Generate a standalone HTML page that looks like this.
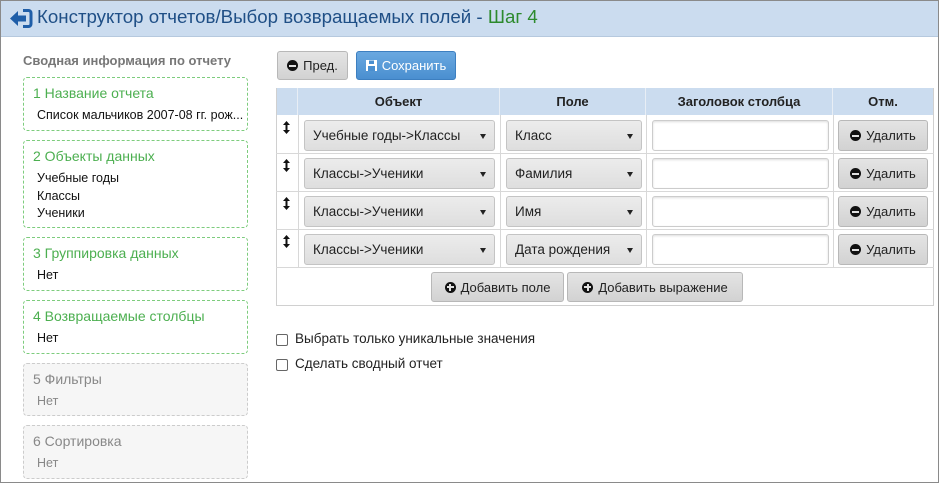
<!DOCTYPE html>
<html><head><meta charset="utf-8"><style>
*{box-sizing:border-box;margin:0;padding:0}
body{width:939px;height:483px;position:relative;overflow:hidden;background:#fff;font-family:"Liberation Sans","DejaVu Sans",sans-serif;font-size:13px;color:#222}
.frame{position:absolute;left:0;top:0;width:939px;height:483px;border:1px solid #8a8a8a;pointer-events:none}
.hdr{position:absolute;left:0;top:0;width:939px;height:37px;background:#cbdcef;border-bottom:1px solid #b6c9de}
.title{position:absolute;left:37px;top:6px;font-size:18.7px;color:#1f4f86;white-space:nowrap}
.title b{font-weight:normal;color:#2d8a2d}
.a{position:absolute}
.sum{left:23px;top:53px;font-weight:bold;color:#777;font-size:13px}
.card{position:absolute;left:23px;width:225px;border:1px dashed #7dcc7d;border-radius:4px;padding:7px 0 0 9px}
.card .t{color:#4caf50;font-size:14px;margin-bottom:6px}
.card .v{padding-left:4px;font-size:12.5px;line-height:17.5px;color:#111}
.card.g{background:#f6f6f6;border-color:#ccc}
.card.g .t{color:#888}.card.g .v{color:#888}
.btn{position:absolute;height:29px;border:1px solid #b8b8b8;border-radius:3px;background:linear-gradient(#e4e4e4,#d2d2d2);font-size:13px;color:#222;display:flex;align-items:center;justify-content:center;gap:5px}
.ic{display:inline-block;width:11px;height:11px;border-radius:50%;background:#111;position:relative}
.ic::after{content:"";position:absolute;left:2px;top:4.5px;width:7px;height:2px;background:#e0e0e0}
.ic.p::before{content:"";position:absolute;left:4.5px;top:2px;width:2px;height:7px;background:#e0e0e0}
.tb{position:absolute;left:276px;top:88px;width:658px;height:218px;border:1px solid #d0d0d0}
.hl{position:absolute;top:88px;height:27px;background:#cbdcef;font-weight:bold;font-size:13px;display:flex;align-items:center;justify-content:center;border-right:1px solid #e8eef5}
.vl{position:absolute;width:1px;background:#d8d8d8}
.hz{position:absolute;left:276px;width:658px;height:1px;background:#d8d8d8}
.sel{position:absolute;height:31px;border:1px solid #c4c4c4;border-radius:3px;background:linear-gradient(#ececec,#dedede);padding-left:8px;display:flex;align-items:center;font-size:13.5px}
.sel::after{content:"";position:absolute;right:8px;top:13px;border-left:3.5px solid transparent;border-right:3.5px solid transparent;border-top:5px solid #222}
.inp{position:absolute;left:652px;width:177px;height:31px;border:1px solid #ccc;border-radius:3px;background:#fff;box-shadow:inset 0 1px 2px #ddd}
.ar{position:absolute;left:283px}
.cb{position:absolute;left:276px;width:12px;height:12px;border:1px solid #666;border-radius:2px}
.cl{position:absolute;left:295px;font-size:13.5px}
</style></head><body>
<div class="hdr">
<svg class="a" style="left:9px;top:8px" width="24" height="21" viewBox="0 0 24 21"><path d="M14 2.5h5.5a2.5 2.5 0 0 1 2.5 2.5v11a2.5 2.5 0 0 1-2.5 2.5H14" fill="none" stroke="#1f5ea8" stroke-width="3"/><path d="M1 10.5L9 3v4.5h8v6H9V18z" fill="#1f5ea8"/></svg>
<div class="title">Конструктор отчетов/Выбор возвращаемых полей - <b>Шаг 4</b></div>
</div>
<div class="a sum">Сводная информация по отчету</div>
<div class="card" style="top:77px;height:54px"><div class="t">1 Название отчета</div><div class="v">Список мальчиков 2007-08 гг. рож...</div></div>
<div class="card" style="top:140px;height:88px"><div class="t">2 Объекты данных</div><div class="v">Учебные годы<br>Классы<br>Ученики</div></div>
<div class="card" style="top:237px;height:54px"><div class="t">3 Группировка данных</div><div class="v">Нет</div></div>
<div class="card" style="top:300px;height:54px"><div class="t">4 Возвращаемые столбцы</div><div class="v">Нет</div></div>
<div class="card g" style="top:363px;height:53px"><div class="t">5 Фильтры</div><div class="v">Нет</div></div>
<div class="card g" style="top:425px;height:54px"><div class="t">6 Сортировка</div><div class="v">Нет</div></div>

<div class="btn" style="left:277px;top:51px;width:71px"><span class="ic"></span>Пред.</div>
<div class="btn" style="left:356px;top:51px;width:100px;background:linear-gradient(#6aa8e0,#4a8fd0);border-color:#3d7fc0;color:#fff"><svg width="11" height="11" viewBox="0 0 11 11"><rect x="0" y="0" width="11" height="11" fill="#fff"/><rect x="3" y="0.5" width="5" height="3.5" fill="#4a8fd0"/><rect x="2" y="6" width="7" height="5" fill="#4a8fd0"/></svg>Сохранить</div>

<div class="tb"></div>
<div class="hl" style="left:277px;width:21px"></div>
<div class="hl" style="left:298px;width:202px">Объект</div>
<div class="hl" style="left:500px;width:146px">Поле</div>
<div class="hl" style="left:646px;width:187px">Заголовок столбца</div>
<div class="hl" style="left:833px;width:100px;border:none">Отм.</div>
<div class="vl" style="left:298px;top:115px;height:152px"></div>
<div class="vl" style="left:500px;top:115px;height:152px"></div>
<div class="vl" style="left:646px;top:115px;height:152px"></div>
<div class="vl" style="left:833px;top:115px;height:152px"></div>
<div class="hz" style="top:153px"></div><div class="hz" style="top:191px"></div><div class="hz" style="top:229px"></div><div class="hz" style="top:267px"></div>

<svg class="ar" style="top:121px" width="7" height="13" viewBox="0 0 7 13"><path d="M3.5 0L7 4H4.5v5H7L3.5 13 0 9h2.5V4H0z" fill="#111"/></svg>
<div class="sel" style="left:304px;top:120px;width:191px">Учебные годы-&gt;Классы</div>
<div class="sel" style="left:506px;top:120px;width:136px">Класс</div>
<div class="inp" style="top:120px"></div>
<div class="btn" style="left:838px;top:120px;width:90px;height:31px"><span class="ic"></span>Удалить</div>

<svg class="ar" style="top:159px" width="7" height="13" viewBox="0 0 7 13"><path d="M3.5 0L7 4H4.5v5H7L3.5 13 0 9h2.5V4H0z" fill="#111"/></svg>
<div class="sel" style="left:304px;top:158px;width:191px">Классы-&gt;Ученики</div>
<div class="sel" style="left:506px;top:158px;width:136px">Фамилия</div>
<div class="inp" style="top:158px"></div>
<div class="btn" style="left:838px;top:158px;width:90px;height:31px"><span class="ic"></span>Удалить</div>

<svg class="ar" style="top:197px" width="7" height="13" viewBox="0 0 7 13"><path d="M3.5 0L7 4H4.5v5H7L3.5 13 0 9h2.5V4H0z" fill="#111"/></svg>
<div class="sel" style="left:304px;top:196px;width:191px">Классы-&gt;Ученики</div>
<div class="sel" style="left:506px;top:196px;width:136px">Имя</div>
<div class="inp" style="top:196px"></div>
<div class="btn" style="left:838px;top:196px;width:90px;height:31px"><span class="ic"></span>Удалить</div>

<svg class="ar" style="top:235px" width="7" height="13" viewBox="0 0 7 13"><path d="M3.5 0L7 4H4.5v5H7L3.5 13 0 9h2.5V4H0z" fill="#111"/></svg>
<div class="sel" style="left:304px;top:234px;width:191px">Классы-&gt;Ученики</div>
<div class="sel" style="left:506px;top:234px;width:136px">Дата рождения</div>
<div class="inp" style="top:234px"></div>
<div class="btn" style="left:838px;top:234px;width:90px;height:31px"><span class="ic"></span>Удалить</div>

<div class="btn" style="left:431px;top:272px;width:133px;height:30px"><span class="ic p"></span>Добавить поле</div>
<div class="btn" style="left:567px;top:272px;width:176px;height:30px"><span class="ic p"></span>Добавить выражение</div>

<div class="cb" style="top:334px"></div><div class="cl" style="top:331px">Выбрать только уникальные значения</div>
<div class="cb" style="top:359px"></div><div class="cl" style="top:356px">Сделать сводный отчет</div>
<div class="frame"></div>
</body></html>
